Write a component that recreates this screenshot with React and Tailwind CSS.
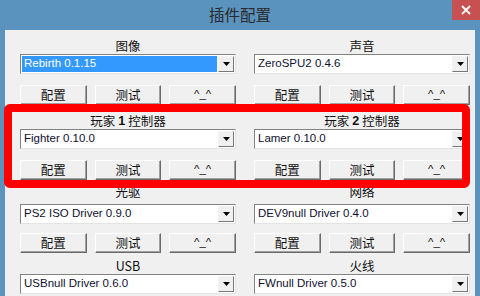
import React from "react";

const font = { fontFamily: '"Liberation Sans", "Noto Sans CJK SC", sans-serif' };
const cjk = { fontFamily: '"Noto Sans CJK SC", "Liberation Sans", sans-serif' };

function Combo({ value, selected }) {
  return (
    <div className="flex h-[20px] w-full border border-t-[#828282] border-l-[#828282] border-r-[#e3e3e3] border-b-[#e3e3e3] bg-white">
      <div className="flex flex-1 items-center p-[1px] min-w-0">
        <div
          className={
            "flex h-full w-full items-center pl-[2px] text-[11.5px] leading-none " +
            (selected ? "bg-[#3399ff] text-white" : "text-[#101030]")
          }
          style={font}
        >
          {value}
        </div>
      </div>
      <div className="my-[1px] mr-[1px] flex w-[16px] items-center justify-center border border-t-[#f4f4f4] border-l-[#f4f4f4] border-r-[#777] border-b-[#777] bg-[#f0f0f0]">
        <svg width="7" height="4" viewBox="0 0 7 4">
          <path d="M0 0H7L3.5 4Z" fill="#000" />
        </svg>
      </div>
    </div>
  );
}

function Btn({ children }) {
  return (
    <div
      className="flex h-[20px] items-center justify-center border border-t-white border-l-white border-r-[#6a6a6a] border-b-[#6a6a6a] bg-[#f0f0f0] text-[12.5px] text-[#111] shadow-[inset_-1px_-1px_0_#a0a0a0]"
      style={cjk}
    >
      {children}
    </div>
  );
}

function Section({ label, value, selected, buttons = true, labelH = "h-[16px]", btnMt = "mt-[11px]" }) {
  return (
    <div className="flex flex-col">
      <div className={"flex items-center justify-center text-[12.5px] text-[#111] " + labelH} style={cjk}>
        {label}
      </div>
      <Combo value={value} selected={selected} />
      {buttons && (
        <div className={"grid grid-cols-3 gap-[8px] " + btnMt}>
          <Btn>配置</Btn>
          <Btn>测试</Btn>
          <Btn>
            <span style={font} className="text-[11.5px]">^_^</span>
          </Btn>
        </div>
      )}
    </div>
  );
}

function PlayerLabel({ n }) {
  return (
    <span className="flex items-center">
      玩家<span className="mx-[3px] font-bold" style={font}>{n}</span>控制器
    </span>
  );
}

export default function App() {
  return (
    <div className="relative h-[296px] w-[480px] overflow-hidden bg-[#5b93bf]">
      <div className="relative flex h-[30px] items-center justify-center">
        <span className="text-[15.5px] text-[#2a2a2a]" style={cjk}>插件配置</span>
        <div className="absolute right-0 top-0 flex h-[20px] w-[28px] items-center justify-center bg-[#c75050]">
          <svg width="10" height="10" viewBox="0 0 10 10">
            <path d="M1 1L9 9M9 1L1 9" stroke="#fff" strokeWidth="1.8" />
          </svg>
        </div>
      </div>
      <div className="mx-[5px] h-[266px] bg-[#f0f0f0] pl-[15px] pr-[5px] pt-[8px]">
        <div className="grid grid-cols-2 gap-x-[18px]">
          <Section label="图像" value="Rebirth 0.1.15" selected />
          <Section label="声音" value="ZeroSPU2  0.4.6" />
        </div>
        <div className="mt-[8px] grid grid-cols-2 gap-x-[18px]">
          <Section label={<PlayerLabel n="1" />} value="Fighter 0.10.0" />
          <Section label={<PlayerLabel n="2" />} value="Lamer 0.10.0" />
        </div>
        <div className="mt-[8px] grid grid-cols-2 gap-x-[18px]">
          <Section label="光驱" value="PS2 ISO Driver 0.9.0" labelH="h-[16px] pb-[8px]" btnMt="mt-[9px]" />
          <Section label="网络" value="DEV9null Driver 0.4.0" labelH="h-[16px] pb-[8px]" btnMt="mt-[9px]" />
        </div>
        <div className="mt-[6px] grid grid-cols-2 gap-x-[18px]">
          <Section label="USB" value="USBnull Driver 0.6.0" buttons={false} labelH="h-[15px]" />
          <Section label="火线" value="FWnull Driver 0.5.0" buttons={false} labelH="h-[15px]" />
        </div>
      </div>
      <div className="absolute left-[4px] top-[104px] h-[84px] w-[466px] rounded-[6px] border-[8px] border-[#ff0000]" />
    </div>
  );
}
